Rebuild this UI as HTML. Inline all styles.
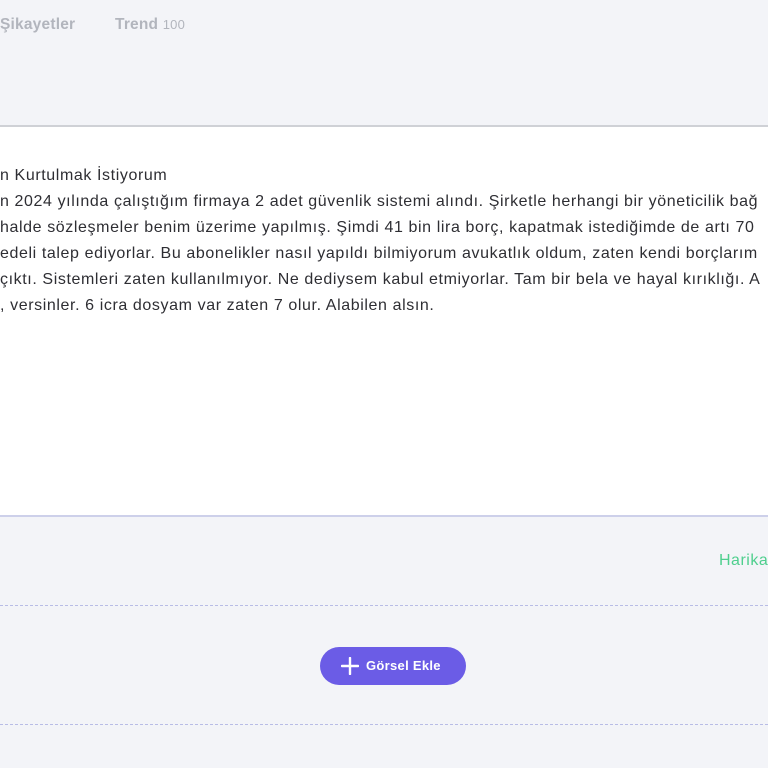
<!DOCTYPE html>
<html><head><meta charset="utf-8"><style>
*{margin:0;padding:0;box-sizing:border-box}
body{width:768px;height:768px;overflow:hidden;background:#f3f4f8;font-family:"Liberation Sans",sans-serif;position:relative}
.top{position:absolute;left:0;top:0;width:768px;height:127px;background:#f3f4f8;border-bottom:2px solid #cfd1d6}
.nav{position:absolute;top:16px;font-size:15.5px;font-weight:bold;color:#b2b5bd;white-space:nowrap;letter-spacing:0.2px}
.white{position:absolute;left:0;top:127px;width:768px;height:390px;background:#fff;border-bottom:2px solid #cdd0ea;overflow:hidden}
.t{position:absolute;left:0;font-size:16px;color:#2e2e33;white-space:nowrap;letter-spacing:0.6px}
.dash{position:absolute;left:0;width:768px;border-top:1.5px dashed #b8bce6}
.btn{position:absolute;left:320px;top:647px;width:146px;height:38px;border-radius:19px;background:#6b5ce6;color:#fff;font-weight:bold;font-size:13px;line-height:38px;padding-left:46px;letter-spacing:0.3px}
.btn svg{position:absolute;left:21px;top:10px}
</style></head><body>
<div class="top">
<div class="nav" style="left:0">Şikayetler</div>
<div class="nav" style="left:115px">Trend <span style="font-weight:normal;font-size:13px">100</span></div>
</div>
<div class="white">
<div class="t" style="top:40px">n Kurtulmak İstiyorum</div>
<div class="t" style="top:66px">n 2024 yılında çalıştığım firmaya 2 adet güvenlik sistemi alındı. Şirketle herhangi bir yöneticilik bağ</div>
<div class="t" style="top:92px">halde sözleşmeler benim üzerime yapılmış. Şimdi 41 bin lira borç, kapatmak istediğimde de artı 70</div>
<div class="t" style="top:118px">edeli talep ediyorlar. Bu abonelikler nasıl yapıldı bilmiyorum avukatlık oldum, zaten kendi borçlarım</div>
<div class="t" style="top:144px">çıktı. Sistemleri zaten kullanılmıyor. Ne dediysem kabul etmiyorlar. Tam bir bela ve hayal kırıklığı. A</div>
<div class="t" style="top:170px">, versinler. 6 icra dosyam var zaten 7 olur. Alabilen alsın.</div>
</div>
<div style="position:absolute;left:719px;top:552px;color:#4fcf8e;font-size:16px;letter-spacing:0.5px;white-space:nowrap">Harika</div>
<div class="dash" style="top:605px"></div>
<div class="btn"><svg width="18" height="18" viewBox="0 0 18 18"><path d="M9 1v16M1 9h16" stroke="#fff" stroke-width="2.4" stroke-linecap="round"/></svg>Görsel Ekle</div>
<div class="dash" style="top:724px"></div>
</body></html>
